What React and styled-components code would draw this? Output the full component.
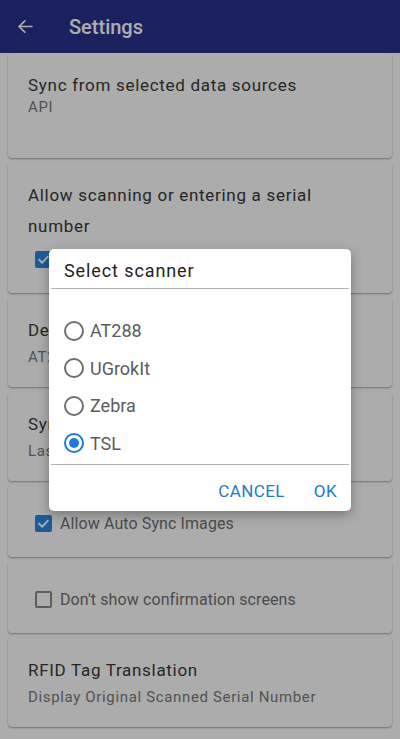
import React from 'react'
import styled, { createGlobalStyle } from 'styled-components'

const GlobalStyle = createGlobalStyle`
  html, body {
    margin: 0;
    padding: 0;
    background: #fefefe;
    font-family: Roboto, "Liberation Sans", sans-serif;
  }
  * { box-sizing: border-box; }
`

const Screen = styled.div`
  position: relative;
  width: 400px;
  height: 739px;
  overflow: hidden;
  background: #fefefe;
`

const Header = styled.header`
  height: 53px;
  background: #29328d;
  display: flex;
  align-items: center;
  padding-left: 17px;
  color: #ffffff;
`

const HeaderTitle = styled.div`
  margin-left: 35px;
  font-size: 20px;
  font-weight: 500;
`

const List = styled.div`
  display: flex;
  flex-direction: column;
  gap: 5px;
  padding: 0 8px;
`

const Card = styled.div`
  background: #fefefe;
  border-radius: 4px;
  box-shadow: 0 1px 2px rgba(0, 0, 0, 0.35);
  padding: ${p => (p.$check ? '26px 27px 23px' : '17px 40px 19px 20px')};
  min-height: ${p => p.$minHeight || 0}px;
`

const Title = styled.div`
  font-size: 17px;
  line-height: 31px;
  letter-spacing: 0.7px;
  color: #383838;
`

const Subtitle = styled.div`
  font-size: 15px;
  line-height: 22px;
  letter-spacing: 0.65px;
  color: #7a7a7a;
  margin-top: ${p => (p.$tight ? '-5px' : '0')};
`

const CheckRow = styled.div`
  display: flex;
  align-items: center;
  gap: 8px;
  height: 22px;
  margin: ${p => (p.$indent ? '6px 0 4px 7px' : '0')};
`

const Box = styled.div`
  width: 17px;
  height: 17px;
  border-radius: 2px;
  display: flex;
  align-items: center;
  justify-content: center;
  background: ${p => (p.$checked ? '#2b88e6' : 'transparent')};
  border: 2px solid ${p => (p.$checked ? '#2b88e6' : '#8a8a8a')};
`

const CheckLabel = styled.span`
  font-size: 16px;
  letter-spacing: 0.1px;
  color: #707070;
`

const Scrim = styled.div`
  position: absolute;
  inset: 0;
  background: rgba(0, 0, 0, 0.32);
  display: flex;
  justify-content: center;
  align-items: flex-start;
  padding-top: 249px;
`

const Dialog = styled.div`
  width: 302px;
  background: #ffffff;
  border-radius: 5px;
  box-shadow: 0 4px 12px rgba(0, 0, 0, 0.3);
  padding: 0 2px;
`

const DialogTitle = styled.div`
  height: 40px;
  padding: 11px 0 0 13px;
  font-size: 18px;
  letter-spacing: 0.9px;
  color: #222222;
  border-bottom: 1.5px solid #b3b3b3;
`

const Options = styled.div`
  display: flex;
  flex-direction: column;
  padding: 23px 0 2px 13px;
  border-bottom: 1.5px solid #b3b3b3;
`

const Option = styled.label`
  display: flex;
  align-items: center;
  gap: 6px;
  height: 37.5px;
  font-size: 18px;
  color: #5c5c5c;
`

const Radio = styled.span`
  width: 20px;
  height: 20px;
  border-radius: 50%;
  border: 2px solid ${p => (p.$on ? '#1e7ad6' : '#6e6e6e')};
  display: flex;
  align-items: center;
  justify-content: center;

  &::after {
    content: '';
    width: 10px;
    height: 10px;
    border-radius: 50%;
    background: ${p => (p.$on ? '#1e7ad6' : 'transparent')};
  }
`

const Actions = styled.div`
  height: 46px;
  display: flex;
  justify-content: flex-end;
  align-items: center;
  gap: 29px;
  padding: 6px 12px 0 0;
`

const TextButton = styled.button`
  border: none;
  background: none;
  padding: 0;
  font-family: inherit;
  font-size: 17px;
  letter-spacing: 0.4px;
  color: #2479c8;
`

const Check = () => (
  <svg width="13" height="13" viewBox="0 0 24 24" fill="none" stroke="#fff" strokeWidth="3.5" strokeLinecap="round" strokeLinejoin="round">
    <polyline points="4 12.5 9.5 18 20 6.5" />
  </svg>
)

const scanners = ['AT288', 'UGrokIt', 'Zebra', 'TSL']

export default function App() {
  return (
    <Screen>
      <GlobalStyle />
      <Header>
        <svg width="17" height="17" viewBox="0 0 24 24" fill="none" stroke="#fff" strokeWidth="2.4" strokeLinecap="round" strokeLinejoin="round">
          <line x1="21" y1="12" x2="3" y2="12" />
          <polyline points="11 4 3 12 11 20" />
        </svg>
        <HeaderTitle>Settings</HeaderTitle>
      </Header>

      <List>
        <Card $minHeight={105}>
          <Title>Sync from selected data sources</Title>
          <Subtitle $tight>API</Subtitle>
        </Card>
        <Card>
          <Title>Allow scanning or entering a serial number</Title>
          <CheckRow $indent>
            <Box $checked><Check /></Box>
            <CheckLabel>Enabled</CheckLabel>
          </CheckRow>
        </Card>
        <Card>
          <Title>Default scanner</Title>
          <Subtitle>AT288</Subtitle>
        </Card>
        <Card>
          <Title>Sync now</Title>
          <Subtitle>Last sync: never</Subtitle>
        </Card>
        <Card $check>
          <CheckRow>
            <Box $checked><Check /></Box>
            <CheckLabel>Allow Auto Sync Images</CheckLabel>
          </CheckRow>
        </Card>
        <Card $check>
          <CheckRow>
            <Box />
            <CheckLabel>Don't show confirmation screens</CheckLabel>
          </CheckRow>
        </Card>
        <Card>
          <Title>RFID Tag Translation</Title>
          <Subtitle>Display Original Scanned Serial Number</Subtitle>
        </Card>
      </List>

      <Scrim>
        <Dialog>
          <DialogTitle>Select scanner</DialogTitle>
          <Options>
            {scanners.map(s => (
              <Option key={s}>
                <Radio $on={s === 'TSL'} />
                {s}
              </Option>
            ))}
          </Options>
          <Actions>
            <TextButton>CANCEL</TextButton>
            <TextButton>OK</TextButton>
          </Actions>
        </Dialog>
      </Scrim>
    </Screen>
  )
}
